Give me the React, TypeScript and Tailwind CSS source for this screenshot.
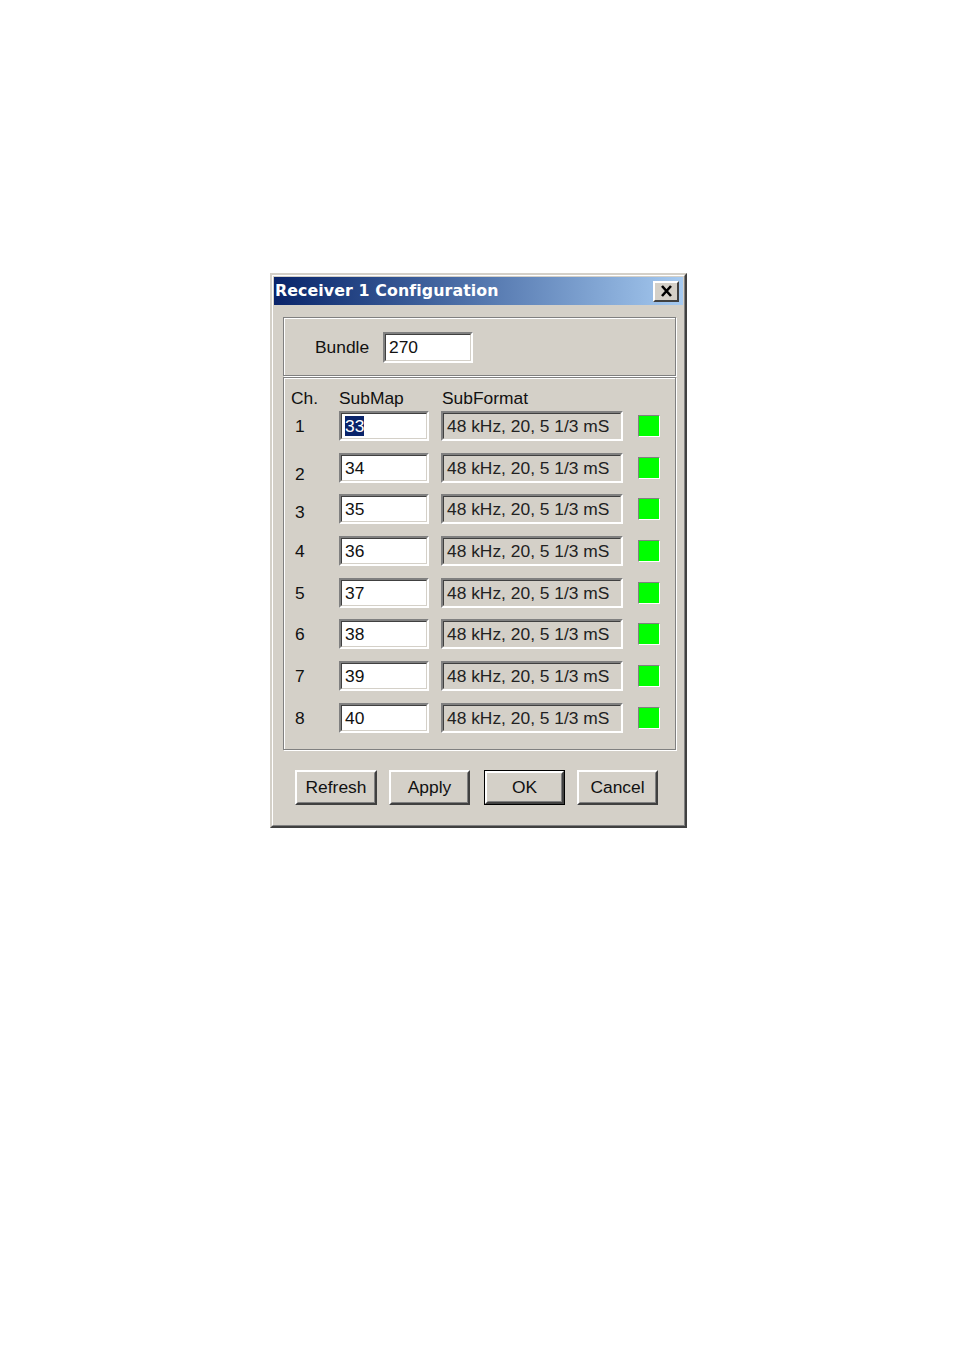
import React from 'react'

const font = { fontFamily: '"Liberation Sans", Arial, sans-serif' }

const rows = [
  { ch: '1', map: '33', shift: 'translate-y-0' },
  { ch: '2', map: '34', shift: 'translate-y-[6px]' },
  { ch: '3', map: '35', shift: 'translate-y-[3px]' },
  { ch: '4', map: '36', shift: 'translate-y-0' },
  { ch: '5', map: '37', shift: 'translate-y-0' },
  { ch: '6', map: '38', shift: 'translate-y-0' },
  { ch: '7', map: '39', shift: 'translate-y-0' },
  { ch: '8', map: '40', shift: 'translate-y-0' },
]

function Sunken({ className, children, bg = 'bg-white' }: { className: string; children: React.ReactNode; bg?: string }) {
  return (
    <div className={`${className} border-2 border-t-[#808080] border-l-[#808080] border-b-white border-r-white`}>
      <div className={`h-full w-full border border-t-[#404040] border-l-[#404040] border-b-[#d4d0c8] border-r-[#d4d0c8] ${bg} flex items-center pl-[3px]`}>
        {children}
      </div>
    </div>
  )
}

function Button({ label, primary, wide }: { label: string; primary?: boolean; wide?: boolean }) {
  const body = (
    <div className="h-full w-full border-2 border-t-white border-l-white border-b-[#404040] border-r-[#404040]">
      <div className="h-full w-full border border-t-[#d4d0c8] border-l-[#d4d0c8] border-b-[#808080] border-r-[#808080] flex items-center justify-center text-[17.4px] text-[#111]">
        {label}
      </div>
    </div>
  )
  return (
    <div className={`h-[35px] ${wide ? 'w-[82px]' : 'w-[81px]'} ${primary ? 'border border-black' : ''}`}>{body}</div>
  )
}

export default function App() {
  return (
    <div className="min-h-[1350px] bg-white pt-[273px] pl-[270px]" style={font}>
      <div className="w-[417px] h-[555px] border-2 border-t-[#d4d0c8] border-l-[#d4d0c8] border-b-[#404040] border-r-[#404040]">
        <div className="h-full border border-t-white border-l-white border-b-[#808080] border-r-[#808080] bg-[#d4d0c8] p-px">
          {/* Title bar */}
          <div className="h-[28px] flex items-center justify-between bg-gradient-to-r from-[#0a246a] to-[#a6caf0] pl-[1px] pr-[4px]">
            <span
              className="text-white font-bold text-[15.8px] tracking-[0.1px]"
              style={{ fontFamily: '"DejaVu Sans", Verdana, sans-serif' }}
            >
              Receiver 1 Configuration
            </span>
            <div className="h-[21px] w-[26px] border-2 border-t-white border-l-white border-b-[#404040] border-r-[#404040] bg-[#d4d0c8] flex items-center justify-center">
              <svg width="13" height="12" viewBox="0 0 13 12">
                <path d="M2 1 L11 11 M11 1 L2 11" stroke="#000" strokeWidth="2.6" />
              </svg>
            </div>
          </div>

          <div className="pl-[9px] pr-[7px] pt-[12px]">
            {/* Bundle group */}
            <div className="h-[59px] border border-[#808080] shadow-[inset_1px_1px_0_#fff,1px_1px_0_#fff] flex items-center pl-[31px] pt-[1px]">
              <span className="text-[17.4px] text-[#111] w-[68px]">Bundle</span>
              <Sunken className="w-[90px] h-[31px]">
                <span className="text-[17.4px] text-[#111]">270</span>
              </Sunken>
            </div>

            {/* Channels group */}
            <div className="mt-px h-[373px] border border-[#808080] shadow-[inset_1px_1px_0_#fff,1px_1px_0_#fff] pl-[7px] pt-[10px]">
              <div className="flex text-[17.4px] text-[#111] h-[20px] items-center">
                <span className="w-[48px]">Ch.</span>
                <span className="w-[103px]">SubMap</span>
                <span>SubFormat</span>
              </div>
              <div className="mt-[3px] flex flex-col gap-[11.7px]">
                {rows.map((r, i) => (
                  <div key={r.ch} className="flex items-center h-[30px]">
                    <span className={`w-[48px] pl-[4px] text-[17.4px] text-[#111] ${r.shift}`}>{r.ch}</span>
                    <Sunken className="w-[90px] h-[30px]">
                      {i === 0 ? (
                        <span className="text-[17.4px] bg-[#0a246a] text-white leading-[20px]">{r.map}</span>
                      ) : (
                        <span className="text-[17.4px] text-[#111]">{r.map}</span>
                      )}
                    </Sunken>
                    <Sunken className="ml-[12px] w-[182px] h-[30px]" bg="bg-[#d4d0c8]">
                      <span className="text-[17.4px] text-[#222] whitespace-nowrap">48 kHz, 20, 5 1/3 mS</span>
                    </Sunken>
                    <div className="ml-[15px] w-[22px] h-[22px] border border-t-[#808080] border-l-[#808080] border-b-white border-r-white bg-[#00ff00]" />
                  </div>
                ))}
              </div>
            </div>

            {/* Buttons */}
            <div className="mt-[20px] flex pl-[12px]">
              <Button label="Refresh" wide />
              <div className="ml-[12px]">
                <Button label="Apply" />
              </div>
              <div className="ml-[14px]">
                <Button label="OK" primary />
              </div>
              <div className="ml-[12px]">
                <Button label="Cancel" />
              </div>
            </div>
          </div>
        </div>
      </div>
    </div>
  )
}
